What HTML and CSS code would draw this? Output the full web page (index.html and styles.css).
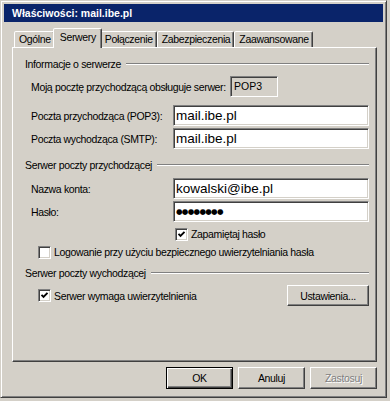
FILE: index.html
```html
<!DOCTYPE html>
<html lang="pl">
<head>
<meta charset="utf-8">
<title>Właściwości: mail.ibe.pl</title>
<link rel="stylesheet" href="styles.css">
</head>
<body>
<div class="window">
  <div class="titlebar">Właściwości: mail.ibe.pl</div>
  <div class="client">
    <div class="tabs">
      <div class="tab">Ogólne</div>
      <div class="tab active">Serwery</div>
      <div class="tab">Połączenie</div>
      <div class="tab">Zabezpieczenia</div>
      <div class="tab">Zaawansowane</div>
    </div>
    <div class="panel">
      <div class="group-head"><span>Informacje o serwerze</span><i class="etch"></i></div>
      <div class="row-type">
        <span class="label">Moją pocztę przychodzącą obsługuje serwer:</span>
        <span class="readonly">POP3</span>
      </div>
      <div class="field gap8"><span class="label">Poczta przychodząca (POP3):</span><span class="input">mail.ibe.pl</span></div>
      <div class="field gap2"><span class="label">Poczta wychodząca (SMTP):</span><span class="input">mail.ibe.pl</span></div>

      <div class="group-head gap9"><span>Serwer poczty przychodzącej</span><i class="etch"></i></div>
      <div class="field gap6"><span class="label">Nazwa konta:</span><span class="input">kowalski@ibe.pl</span></div>
      <div class="field gap2"><span class="label">Hasło:</span><span class="input"><span class="dots">●●●●●●●●</span></span></div>
      <div class="check-row gap4 indent-wide"><span class="checkbox checked"><svg viewBox="0 0 9 9" width="9" height="9"><path d="M1.5 3.8 L3.5 5.8 L7.5 1.8" fill="none" stroke="#000" stroke-width="1.9"/></svg></span><span class="label">Zapamiętaj hasło</span></div>
      <div class="check-row gap2 indent"><span class="checkbox"></span><span class="label">Logowanie przy użyciu bezpiecznego uwierzytelniania hasła</span></div>

      <div class="group-head gap6"><span>Serwer poczty wychodzącej</span><i class="etch"></i></div>
      <div class="check-row tall gap5 indent"><span class="checkbox checked"><svg viewBox="0 0 9 9" width="9" height="9"><path d="M1.5 3.8 L3.5 5.8 L7.5 1.8" fill="none" stroke="#000" stroke-width="1.9"/></svg></span><span class="label">Serwer wymaga uwierzytelnienia</span><span class="button settings">Ustawienia...</span></div>
    </div>
    <div class="buttons">
      <span class="button default">OK</span>
      <span class="button">Anuluj</span>
      <span class="button disabled">Zastosuj</span>
    </div>
  </div>
</div>
</body>
</html>
```
FILE: styles.css
```css
* { box-sizing: border-box; }
html, body {
  margin: 0;
  background: #d4d0c8;
}
body {
  font-family: "Liberation Sans", Arial, sans-serif;
  font-size: 10.5px;
  letter-spacing: -0.35px;
  color: #000;
}
.window {
  width: 387px;
  height: 398px;
  border: 1px solid;
  border-color: #d4d0c8 #404040 #404040 #d4d0c8;
  box-shadow: inset 1px 1px #fff, inset -1px -1px #808080;
  padding: 3px;
  display: flex;
  flex-direction: column;
}
.titlebar {
  height: 18px;
  line-height: 18px;
  background: #0a246a;
  color: #fff;
  font-weight: bold;
  letter-spacing: 0;
  padding-left: 8px;
}
.client {
  padding: 6px 6px 0 8px;
}
.tabs {
  display: flex;
  align-items: flex-end;
  height: 19px;
  padding-left: 2px;
}
.tab {
  height: 16px;
  line-height: 14px;
  padding: 0 3px 0 4px;
  border: 1px solid;
  border-bottom: none;
  border-color: #fff #404040 transparent #fff;
  border-radius: 2px 2px 0 0;
  box-shadow: inset -1px 0 #808080;
  background: #d4d0c8;
}
.tab.active {
  height: 20px;
  line-height: 17px;
  margin: 0 -2px -1px;
  padding: 0 5px 0 6px;
  position: relative;
  z-index: 2;
}
.panel {
  height: 315px;
  border: 1px solid;
  border-color: #fff #404040 #404040 #fff;
  box-shadow: inset -1px -1px #808080;
  padding: 9px 7px 0 12px;
}
.group-head {
  display: flex;
  align-items: center;
  height: 14px;
}
.etch {
  flex: 1;
  height: 2px;
  margin-left: 5px;
  border-top: 1px solid #808080;
  border-bottom: 1px solid #fff;
}
.gap2 { margin-top: 2px; }
.gap4 { margin-top: 4px; }
.gap5 { margin-top: 5px; }
.gap6 { margin-top: 6px; }
.gap8 { margin-top: 8px; }
.gap9 { margin-top: 9px; }
.row-type {
  margin-top: 5px;
  display: grid;
  grid-template-columns: 199px 48px;
  align-items: center;
  height: 21px;
  padding-left: 6px;
}
.readonly {
  height: 21px;
  line-height: 18px;
  padding-left: 3px;
  border: 1px solid;
  border-color: #808080 #fff #fff #808080;
  box-shadow: inset 1px 1px #404040, inset -1px -1px #d4d0c8;
  letter-spacing: 0;
}
.field {
  display: grid;
  grid-template-columns: 142px 1fr;
  align-items: center;
  height: 21px;
  padding-left: 6px;
}
.input {
  height: 21px;
  line-height: 19px;
  background: #fff;
  border: 1px solid;
  border-color: #808080 #fff #fff #808080;
  box-shadow: inset 1px 1px #404040, inset -1px -1px #d4d0c8;
  padding-left: 2px;
  font-size: 13.5px;
  letter-spacing: 0;
}
.dots {
  font-family: "DejaVu Sans", sans-serif;
  font-size: 7.5px;
  letter-spacing: -0.7px;
  vertical-align: top;
  line-height: 19px;
}
.check-row {
  display: flex;
  align-items: center;
  height: 16px;
}
.check-row.tall { height: 21px; }
.indent { padding-left: 13px; }
.indent-wide { padding-left: 150px; }
.checkbox {
  width: 13px;
  height: 13px;
  background: #fff;
  border: 1px solid;
  border-color: #808080 #fff #fff #808080;
  box-shadow: inset 1px 1px #404040, inset -1px -1px #d4d0c8;
  display: flex;
  align-items: center;
  justify-content: center;
  margin-right: 3px;
  flex: none;
}
.checkbox svg { display: block; }
.button {
  display: flex;
  align-items: center;
  justify-content: center;
  height: 21px;
  border: 1px solid;
  border-color: #fff #404040 #404040 #fff;
  box-shadow: inset -1px -1px #808080;
  background: #d4d0c8;
}
.settings {
  margin-left: auto;
  width: 82px;
}
.buttons {
  display: flex;
  justify-content: flex-end;
  gap: 5px;
  margin-top: 5px;
}
.buttons .button {
  width: 67px;
  height: 22px;
}
.button.default {
  border-color: #000;
  box-shadow: inset 1px 1px #fff, inset -1px -1px #404040, inset -2px -2px #808080;
}
.button.disabled {
  color: #808080;
  text-shadow: 1px 1px #fff;
}
```
